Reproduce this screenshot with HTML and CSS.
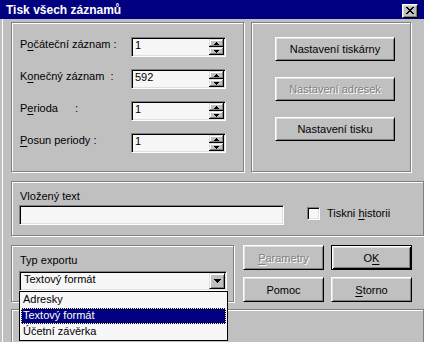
FILE: index.html
```html
<!DOCTYPE html>
<html lang="cs">
<head>
    <meta charset="UTF-8">
    <meta name="viewport" content="width=device-width, initial-scale=1.0">
    <title>Tisk všech záznamů</title>
    <link rel="stylesheet" href="styles.css">
</head>
<body>
    <div class="window">
        <div class="titlebar">
            <span class="title">Tisk všech záznamů</span>
            <div class="close" role="button" title="Zavřít">
                <svg width="8" height="7" viewBox="0 0 8 7" shape-rendering="crispEdges"><path d="M0 0h2v1H0zM6 0h2v1H6zM1 1h2v1H1zM5 1h2v1H5zM2 2h4v1H2zM3 3h2v1H3zM2 4h4v1H2zM1 5h2v1H1zM5 5h2v1H5zM0 6h2v1H0zM6 6h2v1H6z"/></svg>
            </div>
        </div>
        <div class="content">
            <div class="row-top">
                <div class="group records">
                    <span class="label">P<u>o</u>čáteční záznam :</span>
                    <div class="spin sunken">
                        <span class="spin-value">1</span>
                        <div class="spin-buttons">
                            <span class="spin-btn"><svg width="5" height="3" viewBox="0 0 5 3" shape-rendering="crispEdges"><path d="M2 0h1v1h1v1h1v1H0V2h1V1h1z"/></svg></span>
                            <span class="spin-btn"><svg width="5" height="3" viewBox="0 0 5 3" shape-rendering="crispEdges"><path d="M0 0h5v1H4v1H3v1H2V2H1V1H0z"/></svg></span>
                        </div>
                    </div>
                    <span class="label">K<u>o</u>nečný záznam  :</span>
                    <div class="spin sunken">
                        <span class="spin-value">592</span>
                        <div class="spin-buttons">
                            <span class="spin-btn"><svg width="5" height="3" viewBox="0 0 5 3" shape-rendering="crispEdges"><path d="M2 0h1v1h1v1h1v1H0V2h1V1h1z"/></svg></span>
                            <span class="spin-btn"><svg width="5" height="3" viewBox="0 0 5 3" shape-rendering="crispEdges"><path d="M0 0h5v1H4v1H3v1H2V2H1V1H0z"/></svg></span>
                        </div>
                    </div>
                    <span class="label">P<u>e</u>rioda <span class="colon-perioda">:</span></span>
                    <div class="spin sunken">
                        <span class="spin-value">1</span>
                        <div class="spin-buttons">
                            <span class="spin-btn"><svg width="5" height="3" viewBox="0 0 5 3" shape-rendering="crispEdges"><path d="M2 0h1v1h1v1h1v1H0V2h1V1h1z"/></svg></span>
                            <span class="spin-btn"><svg width="5" height="3" viewBox="0 0 5 3" shape-rendering="crispEdges"><path d="M0 0h5v1H4v1H3v1H2V2H1V1H0z"/></svg></span>
                        </div>
                    </div>
                    <span class="label"><u>P</u>osun periody :</span>
                    <div class="spin sunken">
                        <span class="spin-value">1</span>
                        <div class="spin-buttons">
                            <span class="spin-btn"><svg width="5" height="3" viewBox="0 0 5 3" shape-rendering="crispEdges"><path d="M2 0h1v1h1v1h1v1H0V2h1V1h1z"/></svg></span>
                            <span class="spin-btn"><svg width="5" height="3" viewBox="0 0 5 3" shape-rendering="crispEdges"><path d="M0 0h5v1H4v1H3v1H2V2H1V1H0z"/></svg></span>
                        </div>
                    </div>
                </div>
                <div class="group printer">
                    <div class="btn wide" role="button">Nastavení tiskárny</div>
                    <div class="btn wide disabled" role="button">Nastavení adresek</div>
                    <div class="btn wide" role="button">Nastavení tisku</div>
                </div>
            </div>

            <div class="group text-group">
                <span class="label field-label">Vložený text</span>
                <div class="text-row">
                    <div class="textbox sunken"></div>
                    <span class="checkbox sunken"></span>
                    <span class="check-label">Tiskni <u>h</u>istorii</span>
                </div>
            </div>

            <div class="row-export">
                <div class="group export-group">
                    <span class="label field-label export-label">Typ exportu</span>
                    <div class="combo sunken">
                        <span class="combo-value">Textový formát</span>
                        <span class="combo-arrow"><svg width="7" height="4" viewBox="0 0 7 4" shape-rendering="crispEdges"><path d="M0 0h7v1H6v1H5v1H4v1H3V3H2V2H1V1H0z"/></svg></span>
                        <ul class="combo-list">
                            <li>Adresky</li>
                            <li class="selected">Textový formát</li>
                            <li>Účetní závěrka</li>
                        </ul>
                    </div>
                </div>
                <div class="actions">
                    <div class="btn disabled" role="button"><u>P</u>arametry</div>
                    <div class="btn default" role="button">O<u>K</u></div>
                    <div class="btn" role="button">Pomoc</div>
                    <div class="btn" role="button"><u>S</u>torno</div>
                </div>
            </div>

            <div class="group bottom-group"></div>
        </div>
    </div>
</body>
</html>
```

FILE: styles.css
```css
* {
    box-sizing: border-box;
}
body {
    margin: 0;
    font-family: "Liberation Sans", Arial, sans-serif;
    font-size: 11px;
    color: #000;
    background: #c0c0c0;
}
u {
    text-decoration-thickness: 1px;
    text-underline-offset: 2px;
}
.window {
    position: relative;
    width: 424px;
    height: 342px;
    overflow: hidden;
    background: #c0c0c0;
}
.titlebar {
    display: flex;
    justify-content: space-between;
    align-items: flex-start;
    height: 19px;
    padding: 0 6px;
    background: #000080;
    color: #fff;
}
.title {
    padding-top: 2px;
    font-size: 12px;
    font-weight: bold;
    line-height: 17px;
}
.close {
    display: flex;
    align-items: center;
    justify-content: center;
    width: 16px;
    height: 14px;
    margin-top: 4px;
    padding: 0 1px 1px 0;
    background: #c0c0c0;
    border: 1px solid;
    border-color: #fff #000 #000 #fff;
    box-shadow: inset 1px 1px #dfdfdf, inset -1px -1px #808080;
}
.content {
    height: 323px;
    margin-left: 2px;
    padding: 3px 0 0 8px;
    border-left: 1px solid #fff;
}

/* etched group boxes */
.group {
    border: 1px solid #808080;
    box-shadow: inset 1px 1px #fff, 1px 1px #fff;
}
.sunken {
    border: 1px solid;
    border-color: #808080 #fff #fff #808080;
    box-shadow: inset 1px 1px #000, inset -1px -1px #dfdfdf;
    padding: 1px;
    background: #f7f7f7;
}
.label {
    line-height: 14px;
    white-space: pre;
}
.colon-perioda {
    padding-left: 14px;
}

.row-top {
    display: flex;
    gap: 7px;
    height: 150px;
}
.records {
    width: 233px;
    padding: 14px 0 0 8px;
    display: grid;
    grid-template-columns: 111px 95px;
    grid-auto-rows: 20px;
    row-gap: 12px;
    align-content: start;
}
.spin {
    display: flex;
    width: 95px;
    height: 20px;
}
.spin-value {
    padding-left: 2px;
    line-height: 13px;
}
.spin-buttons {
    display: flex;
    flex-direction: column;
    width: 15px;
    margin-left: auto;
}
.spin-btn {
    display: flex;
    align-items: center;
    justify-content: center;
    height: 8px;
    background: #c0c0c0;
    box-shadow: inset -1px -1px #000, inset 1px 1px #dfdfdf, inset -2px -2px #808080, inset 2px 2px #fff;
}
.spin-btn svg {
    display: block;
}

.printer {
    width: 160px;
    padding: 14px 0 0 23px;
    display: flex;
    flex-direction: column;
    gap: 16px;
}
.btn {
    display: flex;
    align-items: center;
    justify-content: center;
    width: 81px;
    height: 25px;
    background: #c0c0c0;
    border: 1px solid;
    border-color: #fff #000 #000 #fff;
    box-shadow: inset 1px 1px #dfdfdf, inset -1px -1px #808080;
}
.btn.wide {
    width: 120px;
    height: 24px;
}
.btn.disabled {
    color: #808080;
    text-shadow: 1px 1px #fff;
}
.btn.default {
    border-color: #000;
    box-shadow: inset 1px 1px #fff, inset -1px -1px #000, inset 2px 2px #dfdfdf, inset -2px -2px #808080;
}

.text-group {
    height: 55px;
    margin-top: 9px;
    padding: 7px 0 0 7px;
}
.field-label {
    display: block;
    padding-left: 1px;
    margin-bottom: 2px;
}
.text-row {
    display: flex;
    align-items: flex-start;
}
.textbox {
    width: 265px;
    height: 20px;
}
.checkbox {
    width: 13px;
    height: 13px;
    margin: 2px 0 0 23px;
}
.check-label {
    margin: 1px 0 0 7px;
    line-height: 14px;
}

.row-export {
    display: flex;
    height: 57px;
    margin-top: 9px;
}
.export-group {
    width: 223px;
    padding: 7px 0 0 7px;
}
.export-label {
    margin-bottom: 4px;
}
.combo {
    position: relative;
    display: flex;
    width: 208px;
    height: 20px;
}
.combo-value {
    padding-left: 3px;
    line-height: 12px;
}
.combo-arrow {
    display: flex;
    align-items: center;
    justify-content: center;
    width: 16px;
    margin-left: auto;
    background: #c0c0c0;
    border: 1px solid;
    border-color: #dfdfdf #000 #000 #dfdfdf;
    box-shadow: inset 1px 1px #fff, inset -1px -1px #808080;
}
.combo-list {
    position: absolute;
    top: calc(100% + 1px);
    left: -1px;
    width: 209px;
    margin: 0;
    padding: 0;
    list-style: none;
    background: #f7f7f7;
    border: 1px solid #000;
}
.combo-list li {
    height: 16px;
    margin: 0 1px;
    padding-left: 2px;
    line-height: 14px;
}
.combo-list .selected {
    background: #000080;
    color: #fff;
    outline: 1px dotted #ffff80;
    outline-offset: -1px;
}
.actions {
    display: grid;
    grid-template-columns: 81px 81px;
    grid-template-rows: 25px 25px;
    gap: 7px;
    margin-left: 9px;
}

.bottom-group {
    height: 80px;
    margin-top: 7px;
}
```
